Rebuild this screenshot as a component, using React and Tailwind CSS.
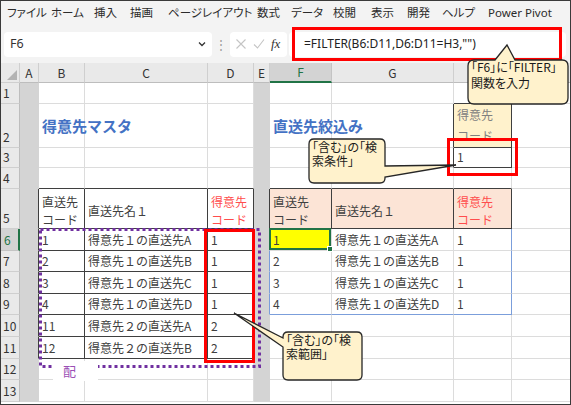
import React from 'react';

const COLS = ['A', 'B', 'C', 'D', 'E', 'F', 'G', 'H', 'I'];
const ROWS = [1, 2, 3, 4, 5, 6, 7, 8, 9, 10, 11, 12, 13];

const MENU = [
  ['ファイル', 'w-[44px]'],
  ['ホーム', 'w-[43px]'],
  ['挿入', 'w-[36px]'],
  ['描画', 'w-[38px]'],
  ['ページレイアウト', 'w-[89px]'],
  ['数式', 'w-[34px]'],
  ['データ', 'w-[42px]'],
  ['校閲', 'w-[38px]'],
  ['表示', 'w-[36px]'],
  ['開発', 'w-[35px]'],
  ['ヘルプ', 'w-[46px]'],
  ['Power Pivot', 'w-[70px]'],
];

const BR = {
  grid: 'border-r-[#dcdcdc]',
  dark: 'border-r-[#3f3f3f]',
  blue: 'border-r-[#7b9edb]',
  fill: 'border-r-[#d4d4d4]',
};
const BB = {
  grid: 'border-b-[#dcdcdc]',
  dark: 'border-b-[#3f3f3f]',
  blue: 'border-b-[#7b9edb]',
  fill: 'border-b-[#d4d4d4]',
};
const BG = {
  white: 'bg-white',
  fill: 'bg-[#d4d4d4]',
  peach: 'bg-[#fce4d6]',
  cream: 'bg-[#fff2cc]',
  yellow: 'bg-[#ffff00]',
};

const VALUES = {
  B6: '1', C6: '得意先１の直送先A', D6: '1',
  B7: '2', C7: '得意先１の直送先B', D7: '1',
  B8: '3', C8: '得意先１の直送先C', D8: '1',
  B9: '4', C9: '得意先１の直送先D', D9: '1',
  B10: '11', C10: '得意先２の直送先A', D10: '2',
  B11: '12', C11: '得意先２の直送先B', D11: '2',
  F6: '1', G6: '得意先１の直送先A', H6: '1',
  F7: '2', G7: '得意先１の直送先B', H7: '1',
  F8: '3', G8: '得意先１の直送先C', H8: '1',
  F9: '4', G9: '得意先１の直送先D', H9: '1',
  H3: '1',
};

const inCols = (c, list) => list.includes(c);

function cellSpec(c, r) {
  let right = 'grid';
  let bottom = 'grid';
  let bg = 'white';
  if (c === 'A' || c === 'E') { bg = 'fill'; right = 'fill'; bottom = 'fill'; }
  if (inCols(c, ['B', 'C', 'D']) && r >= 5 && r <= 11) { right = 'dark'; bottom = 'dark'; }
  if (c === 'A' && r >= 5 && r <= 11) right = 'dark';
  if (inCols(c, ['B', 'C', 'D']) && r === 4) bottom = 'dark';
  if (inCols(c, ['F', 'G', 'H']) && r === 5) { right = 'dark'; bottom = 'dark'; bg = 'peach'; }
  if (c === 'E' && r === 5) right = 'dark';
  if (inCols(c, ['F', 'G', 'H']) && r === 4) bottom = 'dark';
  if (c === 'E' && r >= 6 && r <= 9) right = 'blue';
  if (c === 'H' && r >= 6 && r <= 9) right = 'blue';
  if (inCols(c, ['F', 'G', 'H']) && r === 9) bottom = 'blue';
  if (c === 'H' && (r === 2 || r === 3)) { right = 'dark'; bottom = 'dark'; }
  if (c === 'H' && r === 2) bg = 'cream';
  if (c === 'G' && (r === 2 || r === 3)) right = 'dark';
  if (c === 'H' && r === 1) bottom = 'dark';
  if (c === 'F' && r === 6) bg = 'yellow';
  return { right, bottom, bg };
}

function TwoLine({ red }) {
  const color = red ? 'text-[#ff4d4d]' : 'text-[#404040]';
  return (
    <div className={`flex flex-col justify-center pl-[3px] pt-[4px] text-[12px] leading-[18px] ${color}`}>
      <span>{red ? '得意先' : '直送先'}</span>
      <span>コード</span>
    </div>
  );
}

function CellContent({ c, r }) {
  const key = `${c}${r}`;
  if (key === 'B2' || key === 'F2') {
    return (
      <div className="relative z-10 flex items-center pl-[3px] pt-[1px] whitespace-nowrap text-[15px] font-bold text-[#4472c4]">
        {key === 'B2' ? '得意先マスタ' : '直送先絞込み'}
      </div>
    );
  }
  if (key === 'H2') {
    return (
      <div className="flex flex-col justify-start pl-[3px] text-[12px] leading-[21px] text-[#808080]">
        <span>得意先</span>
        <span>コード</span>
      </div>
    );
  }
  if (key === 'B5' || key === 'F5') return <TwoLine />;
  if (key === 'D5' || key === 'H5') return <TwoLine red />;
  if (key === 'C5' || key === 'G5') {
    return (
      <div className="flex items-center pl-[3px] pt-[5px] text-[12px] leading-[16px] text-[#404040]">直送先名１</div>
    );
  }
  const v = VALUES[key];
  if (!v) return null;
  return (
    <div className="flex items-end pl-[3px] pb-[2px] whitespace-nowrap text-[12px] leading-[16px] text-[#404040]">{v}</div>
  );
}

function Callout({ className, lines }) {
  return (
    <div className={`absolute text-[12px] text-[#1a1a1a] [font-feature-settings:'palt'] ${className}`}>
      {lines.map((l) => (
        <div key={l} className="whitespace-nowrap">{l}</div>
      ))}
    </div>
  );
}

export default function App() {
  return (
    <div className="relative w-[571px] h-[405px] overflow-hidden bg-white font-['Noto_Sans_CJK_JP',sans-serif]">
      {/* Ribbon tabs */}
      <div className="flex items-center h-[25px] pl-[7px] bg-[#f3f3f3] text-[11.5px] text-[#2b2b2b] [font-feature-settings:'palt']">
        {MENU.map(([label, w]) => (
          <div key={label} className={`${w} whitespace-nowrap ${label === 'Power Pivot' ? "font-['Noto_Sans',sans-serif]" : ''}`}>{label}</div>
        ))}
      </div>

      {/* Formula bar */}
      <div className="flex items-center h-[38px] pl-[4px] bg-[#f3f3f3]">
        <div className="flex items-center justify-between w-[208px] h-[25px] pl-[6px] pr-[5px] bg-white rounded-[4px] font-['Noto_Sans',sans-serif] text-[12.5px] text-[#333]">
          <span>F6</span>
          <svg width="10" height="10" viewBox="0 0 10 10">
            <path d="M2 3.5 L5 6.5 L8 3.5" fill="none" stroke="#333" strokeWidth="1.3" />
          </svg>
        </div>
        <div className="flex justify-center w-[18px] text-[#9a9a9a] text-[12px]">⋮</div>
        <div className="flex items-center gap-[6px] w-[57px] h-[25px] pl-[5px] bg-white rounded-[4px]">
          <svg width="12" height="12" viewBox="0 0 12 12">
            <path d="M1.5 1.5 L10.5 10.5 M10.5 1.5 L1.5 10.5" stroke="#c4c4c4" strokeWidth="1.1" />
          </svg>
          <svg width="12" height="12" viewBox="0 0 12 12">
            <path d="M1 6.5 L4.5 10 L11 1.5" fill="none" stroke="#c4c4c4" strokeWidth="1.1" />
          </svg>
          <span className="font-['Liberation_Serif',serif] italic text-[13px] text-[#333]">fx</span>
        </div>
        <div className="flex items-center w-[277px] h-[25px] ml-[2px] pl-[15px] bg-white rounded-[4px] font-['Noto_Sans',sans-serif] text-[12px] text-[#222]">
          =FILTER(B6:D11,D6:D11=H3,"")
        </div>
      </div>

      {/* Sheet grid */}
      <div className="grid grid-cols-[20px_19px_46px_123px_46px_16px_62px_122px_58px_1fr] grid-rows-[20px_21px_44px_20px_21px_40px_repeat(8,21.6px)]">
        <div className="flex items-end justify-end bg-[#e9e9e9] border-r border-b border-[#cfcfcf]">
          <svg width="14" height="14" viewBox="0 0 14 14">
            <polygon points="12,2 12,12 2,12" fill="#b3b3b3" />
          </svg>
        </div>
        {COLS.map((c) => (
          <div
            key={c}
            className={
              c === 'F'
                ? 'flex items-center justify-center bg-[#d3d3d3] border-r border-r-[#c4c4c4] border-b-2 border-b-[#217346] text-[12px] text-[#217346]'
                : 'flex items-center justify-center bg-[#e9e9e9] border-r border-b border-r-[#cfcfcf] border-b-[#bdbdbd] text-[12px] text-[#333]'
            }
          >
            {c}
          </div>
        ))}

        {ROWS.map((r) => (
          <React.Fragment key={r}>
            <div
              className={
                r === 6
                  ? 'flex items-end pl-[4px] pb-[2px] bg-[#d3d3d3] border-r-2 border-r-[#217346] border-b border-b-[#c4c4c4] text-[12px] leading-[16px] text-[#217346]'
                  : 'flex items-end pl-[3px] pb-[2px] bg-[#e9e9e9] border-r border-b border-r-[#bdbdbd] border-b-[#cfcfcf] text-[12px] leading-[16px] text-[#333]'
              }
            >
              {r}
            </div>
            {COLS.map((c) => {
              const s = cellSpec(c, r);
              return (
                <div key={c} className={`relative flex min-w-0 border-r border-b ${BR[s.right]} ${BB[s.bottom]} ${BG[s.bg]}`}>
                  <CellContent c={c} r={r} />
                  {c === 'F' && r === 6 && (
                    <div className="absolute z-10 -left-[1px] -top-[1px] -right-[0px] -bottom-[0px] border-2 border-[#217346]">
                      <div className="absolute -right-[4px] -bottom-[4px] w-[6px] h-[6px] bg-[#217346] border border-white" />
                    </div>
                  )}
                </div>
              );
            })}
          </React.Fragment>
        ))}
      </div>

      {/* Annotations drawn over the sheet */}
      <svg className="absolute inset-0 pointer-events-none z-20" width="571" height="405" viewBox="0 0 571 405">
        <rect x="293.5" y="28.5" width="267" height="31" fill="none" stroke="#ff0000" strokeWidth="3" />
        <rect x="448.5" y="139.5" width="68" height="35" fill="none" stroke="#ff0000" strokeWidth="3" />
        <rect x="40.5" y="229.5" width="219" height="137" fill="none" stroke="#7030a0" strokeWidth="3" strokeDasharray="3 3" />
        <rect x="205.5" y="230.5" width="48" height="131" fill="none" stroke="#ff0000" strokeWidth="3" />
        <path
          d="M474 60 L495 60 L507 45 L515 60 L562 60 Q568 60 568 66 L568 98 Q568 104 562 104 L474 104 Q468 104 468 98 L468 66 Q468 60 474 60 Z"
          fill="#fff2cc" stroke="#262626" strokeWidth="1.3"
        />
        <path
          d="M314 139 L380 139 Q385 139 385 144 L385 166 L456 165 L385 177 L385 178 Q385 183 380 183 L314 183 Q309 183 309 178 L309 144 Q309 139 314 139 Z"
          fill="#fff2cc" stroke="#262626" strokeWidth="1.3"
        />
        <path
          d="M288 332 L357 332 Q362 332 362 337 L362 375 Q362 380 357 380 L288 380 Q283 380 283 375 L283 347 L234 313 L283 338 L283 337 Q283 332 288 332 Z"
          fill="#fff2cc" stroke="#262626" strokeWidth="1.3"
        />
      </svg>

      <div className="absolute z-20 left-[53px] top-[361px] w-[45px] h-[20px] pl-[10px] bg-white text-[13px] leading-[20px] text-[#9b4fb5]">配</div>

      <Callout className="z-30 left-[471px] top-[59px] leading-[16px]" lines={['「F6」に「FILTER」', '関数を入力']} />
      <Callout className="z-30 left-[312px] top-[140px] leading-[14px]" lines={['「含む」の「検', '索条件」']} />
      <Callout className="z-30 left-[286px] top-[333px] leading-[14px]" lines={['「含む」の「検', '索範囲」']} />

      <div className="absolute inset-0 z-40 border border-[#3a3a3a] pointer-events-none" />
    </div>
  );
}
